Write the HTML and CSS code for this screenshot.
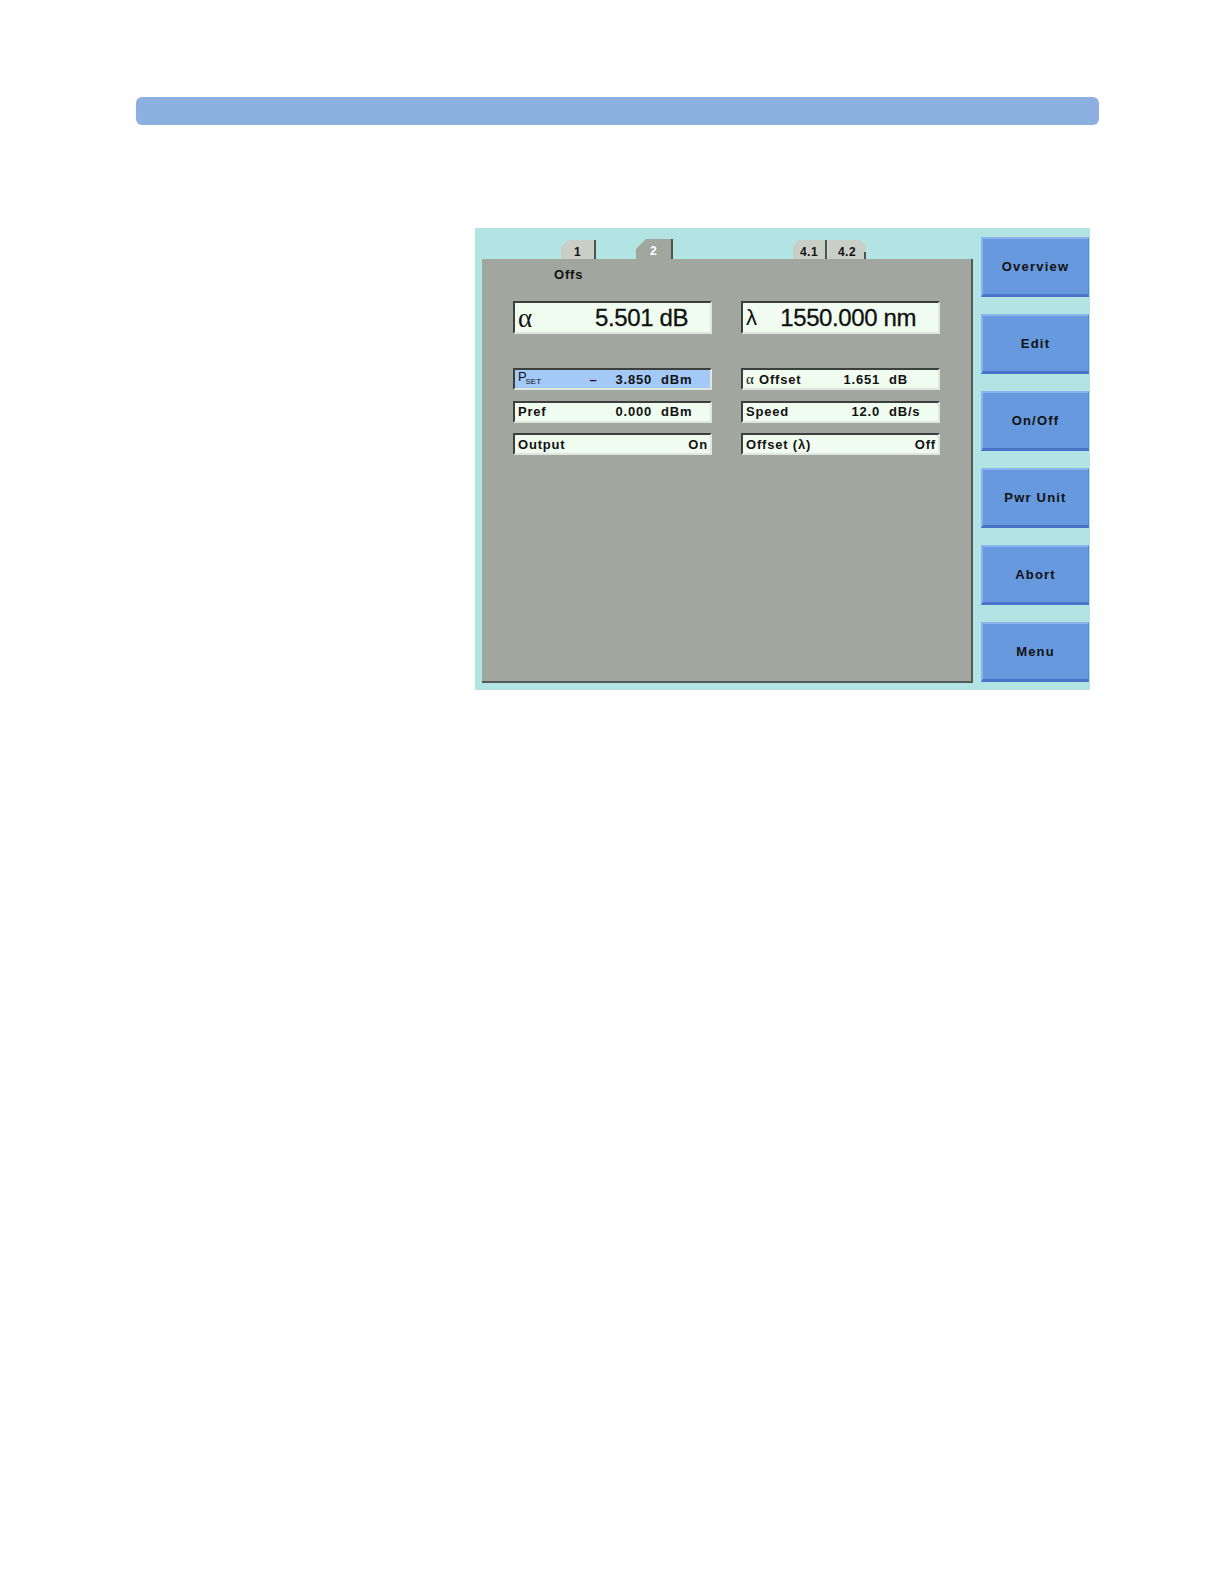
FILE: index.html
```html
<!DOCTYPE html>
<html>
<head>
<meta charset="utf-8">
<link rel="stylesheet" href="styles.css">
</head>
<body>
<div class="topbar"></div>
<div class="screen">
  <div class="main">
    <div class="tabs">
      <div class="tab tab-1">1</div>
      <div class="tab tab-2 active">2</div>
      <div class="tab tab-41">4.1</div>
      <div class="tab tab-42">4.2</div>
    </div>
    <div class="panel">
      <div class="offs">Offs</div>
      <div class="grid big-row">
        <div class="field big"><span class="sym">α</span><span class="bigval">5.501 dB</span></div>
        <div class="field big"><span class="sym lam">λ</span><span class="bigval">1550.000 nm</span></div>
      </div>
      <div class="grid small-rows">
        <div class="field small selected"><span class="lbl pset">P<sub>SET</sub></span><span class="minus">–</span><span class="val">3.850</span><span class="unit">dBm</span></div>
        <div class="field small"><span class="lbl"><span class="alpha-s">α</span> Offset</span><span class="val">1.651</span><span class="unit">dB</span></div>
        <div class="field small"><span class="lbl">Pref</span><span class="val">0.000</span><span class="unit">dBm</span></div>
        <div class="field small"><span class="lbl">Speed</span><span class="val">12.0</span><span class="unit">dB/s</span></div>
        <div class="field small"><span class="lbl">Output</span><span class="state">On</span></div>
        <div class="field small"><span class="lbl">Offset (λ)</span><span class="state">Off</span></div>
      </div>
    </div>
  </div>
  <div class="buttons">
    <div class="btn">Overview</div>
    <div class="btn">Edit</div>
    <div class="btn">On/Off</div>
    <div class="btn">Pwr Unit</div>
    <div class="btn">Abort</div>
    <div class="btn">Menu</div>
  </div>
</div>
</body>
</html>
```
FILE: styles.css
```css
html, body {
  margin: 0;
  padding: 0;
  background: #ffffff;
  font-family: "Liberation Sans", Arial, sans-serif;
}
.topbar {
  margin: 97px 0 0 136px;
  width: 963px;
  height: 28px;
  background: #8cb0e0;
  border-radius: 6px;
}
.screen {
  margin: 103px 0 0 475px;
  width: 615px;
  height: 462px;
  background: #b2e4e4;
  display: flex;
}
.main {
  width: 491px;
  padding: 11px 0 0 7px;
  display: flex;
  flex-direction: column;
}
.tabs {
  height: 20px;
  display: flex;
  align-items: flex-end;
}
.tab {
  height: 19px;
  box-sizing: border-box;
  font-size: 12px;
  font-weight: bold;
  line-height: 24px;
  text-align: center;
  color: #111;
  background: #c9cfc7;
  border-right: 2px solid #4e534e;
  letter-spacing: 0.5px;
}
.tab-1 {
  margin-left: 79px;
  width: 35px;
  clip-path: polygon(7px 0, 100% 0, 100% 100%, 0 100%, 0 7px);
}
.tab-2 {
  margin-left: 40px;
  width: 37px;
  height: 20px;
  line-height: 25px;
  background: #a1a79e;
  color: #fff;
  clip-path: polygon(10px 0, 100% 0, 100% 100%, 0 100%, 0 10px);
}
.tab-41 {
  margin-left: 120px;
  width: 34px;
  clip-path: polygon(6px 0, 100% 0, 100% 100%, 0 100%, 0 6px);
}
.tab-42 {
  margin-left: 1px;
  width: 38px;
  border-right: none;
  position: relative;
  clip-path: polygon(0 0, calc(100% - 6px) 0, 100% 6px, 100% 100%, 0 100%);
}
.tab-42::after {
  content: "";
  position: absolute;
  right: 0;
  bottom: 0;
  width: 2px;
  height: 7px;
  background: #4e534e;
}
.panel {
  width: 491px;
  height: 424px;
  box-sizing: border-box;
  background: #a1a79e;
  border-right: 2px solid #555a55;
  border-bottom: 2px solid #555a55;
  padding-left: 31px;
}
.offs {
  margin: 8px 0 0 41px;
  height: 16px;
  line-height: 16px;
  font-size: 13px;
  font-weight: bold;
  letter-spacing: 0.8px;
  color: #111;
}
.grid {
  display: grid;
  grid-template-columns: 199px 199px;
  column-gap: 29px;
}
.big-row {
  margin-top: 18px;
}
.small-rows {
  margin-top: 34px;
  row-gap: 10.7px;
}
.field {
  box-sizing: border-box;
  background: #f0fcf0;
  border-top: 2px solid #3c3f3c;
  border-left: 2px solid #3c3f3c;
  border-bottom: 2px solid #dfe6de;
  border-right: 2px solid #dfe6de;
  display: flex;
  align-items: center;
  color: #111;
}
.big {
  height: 33px;
  padding: 0 22px 0 3px;
}
.sym {
  font-family: "Liberation Serif", "Times New Roman", serif;
  font-size: 27px;
  flex: 1;
  line-height: 28px;
}
.sym.lam {
  font-family: "Liberation Sans", Arial, sans-serif;
  font-size: 22px;
}
.bigval {
  font-size: 24px;
  letter-spacing: -0.4px;
  line-height: 28px;
  -webkit-text-stroke: 0.3px #111;
}
.small {
  height: 22px;
  padding: 0 2px 0 3px;
  font-size: 13px;
  font-weight: bold;
  letter-spacing: 0.8px;
  line-height: 17px;
}
.selected {
  background: #a3c9f7;
}
.lbl {
  flex: 1;
  white-space: nowrap;
}
.pset {
  font-weight: normal;
  flex: 0 0 auto;
}
.pset sub {
  font-size: 8px;
  font-weight: normal;
  letter-spacing: 0;
  vertical-align: -3px;
  margin-left: -2px;
}
.minus {
  flex: 1;
  text-align: right;
  padding-right: 18px;
}
.alpha-s {
  font-family: "Liberation Serif", serif;
  font-weight: normal;
  font-size: 15px;
}
.val {
  text-align: right;
}
.unit {
  width: 47px;
  margin-left: 9px;
  text-align: left;
}
.state {
  text-align: right;
}
.buttons {
  margin-left: 8px;
  padding-top: 9px;
  display: flex;
  flex-direction: column;
  gap: 17px;
}
.btn {
  width: 108px;
  height: 60px;
  box-sizing: border-box;
  background: #6699dd;
  border-top: 2px solid #8ab3ef;
  border-left: 2px solid #8ab3ef;
  border-bottom: 3px solid #4a72c9;
  border-right: 1px solid #5a86d2;
  display: flex;
  align-items: center;
  justify-content: center;
  font-size: 13px;
  font-weight: bold;
  letter-spacing: 1.2px;
  color: #111;
}
```
